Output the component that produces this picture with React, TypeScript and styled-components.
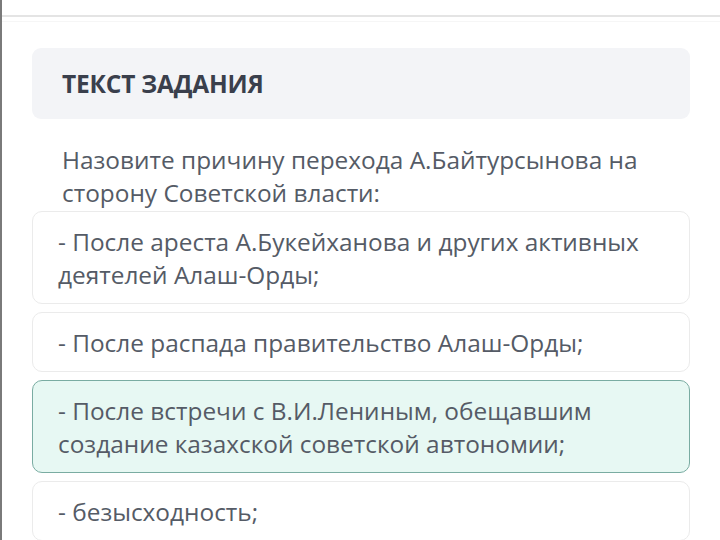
import React from "react";
import styled, { createGlobalStyle } from "styled-components";

const Global = createGlobalStyle`
  html, body { margin: 0; padding: 0; background: #ffffff; }
  body { font-family: "Open Sans", "Noto Sans", sans-serif; }
`;

const Page = styled.div`
  width: 720px;
  height: 540px;
  overflow: hidden;
  box-sizing: border-box;
  border-left: 2px solid #7a7a7a;
  background: #fff;
`;

const TopBar = styled.div`
  height: 15px;
  border-bottom: 2px solid #e4e4e4;
`;

const SubLine = styled.div`
  height: 4px;
  border-bottom: 1px solid #f6f6f6;
`;

const Content = styled.div`
  padding: 26px 30px 0 30px;
  display: flex;
  flex-direction: column;
`;

const Header = styled.div`
  height: 71px;
  background: #f3f4f7;
  border-radius: 9px;
  display: flex;
  align-items: center;
  padding: 0 30px;
`;

const Title = styled.h2`
  margin: 0;
  font-size: 24.5px;
  font-weight: 700;
  color: #3a3f4c;
  letter-spacing: -0.2px;
`;

const Question = styled.p`
  margin: 24px 0 0 30px;
  font-size: 24.4px;
  line-height: 33px;
  color: #555b66;
`;

const Options = styled.div`
  display: flex;
  flex-direction: column;
  gap: 8px;
  margin-top: 2px;
`;

const Option = styled.div<{ $selected?: boolean }>`
  border-radius: 10px;
  border: 1px solid ${(p) => (p.$selected ? "#7aaca2" : "#ebebeb")};
  background: ${(p) => (p.$selected ? "#e7f8f3" : "#ffffff")};
  padding: 12.5px 25px;
  font-size: 24.4px;
  line-height: 33px;
  color: #555b66;
`;

const options = [
  "- После ареста А.Букейханова и других активных деятелей Алаш-Орды;",
  "- После распада правительство Алаш-Орды;",
  "- После встречи с В.И.Лениным, обещавшим создание казахской советской автономии;",
  "- безысходность;",
];

export default function App() {
  return (
    <>
      <Global />
      <Page>
        <TopBar />
        <SubLine />
        <Content>
          <Header>
            <Title>ТЕКСТ ЗАДАНИЯ</Title>
          </Header>
          <Question>
            Назовите причину перехода А.Байтурсынова на сторону Советской власти:
          </Question>
          <Options>
            {options.map((o, i) => (
              <Option key={i} $selected={i === 2}>
                {o}
              </Option>
            ))}
          </Options>
        </Content>
      </Page>
    </>
  );
}
